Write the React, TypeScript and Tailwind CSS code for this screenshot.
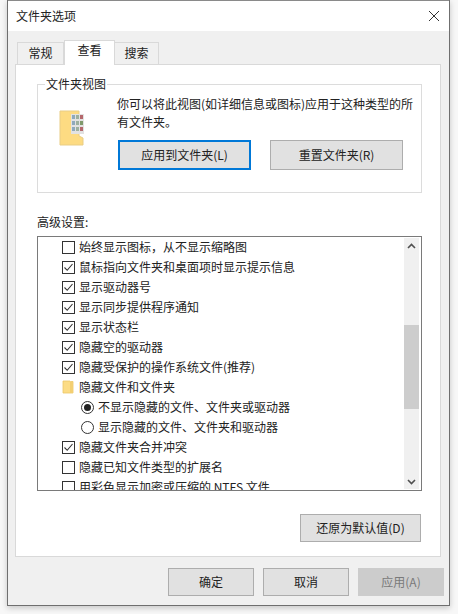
import React from "react";

const font = { fontFamily: '"Noto Sans CJK SC", "Liberation Sans", sans-serif' };

function Check({ checked }: { checked?: boolean }) {
  return (
    <span className="w-[13px] h-[13px] border border-[#333333] bg-white flex-none flex items-center justify-center">
      {checked && (
        <svg width="11" height="11" viewBox="0 0 11 11" fill="none">
          <path d="M1.5 5.5 L4.2 8.3 L9.5 2" stroke="#333333" strokeWidth="1.1" />
        </svg>
      )}
    </span>
  );
}

function Radio({ checked }: { checked?: boolean }) {
  return (
    <span className="w-[13px] h-[13px] rounded-full border border-[#333333] bg-white flex-none flex items-center justify-center">
      {checked && <span className="w-[7px] h-[7px] rounded-full bg-[#222222]" />}
    </span>
  );
}

function Row({ kind, checked, text }: { kind: "check" | "radio" | "folder"; checked?: boolean; text: string }) {
  return (
    <div className={`h-5 flex-none flex items-center ${kind === "radio" ? "pl-[43px] gap-[4px]" : "pl-[24px] gap-[4px]"}`}>
      {kind === "check" && <Check checked={checked} />}
      {kind === "radio" && <Radio checked={checked} />}
      {kind === "folder" && (
        <svg width="13" height="14" viewBox="0 0 13 14" className="flex-none">
          <path d="M1 1 H8 L8.5 1.5 H11 V13 H1 Z" fill="#fcdc85" stroke="#ecc667" strokeWidth="0.8" />
          <rect x="8" y="2" width="3" height="11" fill="#f3cf72" />
        </svg>
      )}
      <span className="text-[12px] leading-5 text-[#222222] whitespace-nowrap">{text}</span>
    </div>
  );
}

function Btn({ className, children }: { className: string; children: React.ReactNode }) {
  return (
    <div className={`flex items-center justify-center text-[12px] flex-none ${className}`}>{children}</div>
  );
}

const plain = "border border-[#adadad] bg-[#e1e1e1] text-[#222222]";

export default function App() {
  return (
    <div className="w-[458px] h-[614px] bg-[#f7f7f7] overflow-hidden" style={font}>
      <div className="ml-[7px] w-[443px] h-[606px] border border-t-0 border-[#6f6f6f] bg-[#f0f0f0] flex flex-col shadow-[0_2px_6px_rgba(0,0,0,0.2)]">
        <div className="h-[31px] flex-none bg-white border-t border-[#8a8a8a] flex items-center justify-between pl-[8px] pr-[9px] pb-[1px]">
          <span className="text-[12px] text-[#222222]">文件夹选项</span>
          <svg width="12" height="12" viewBox="0 0 12 12" fill="none">
            <path d="M1 1 L11 11 M11 1 L1 11" stroke="#333333" strokeWidth="1" />
          </svg>
        </div>

        <div className="flex-none flex items-end h-[33px] pl-[9px]">
          <div className="w-[47px] h-[22px] bg-[#f0f0f0] border border-b-0 border-[#d9d9d9] text-[12px] text-[#222222] flex items-center justify-center pb-[2px]">常规</div>
          <div className="w-[51px] h-[25px] -mb-px relative bg-white border border-b-0 border-[#d9d9d9] text-[12px] text-[#222222] flex items-start justify-center">查看</div>
          <div className="w-[44px] h-[22px] bg-[#f0f0f0] border border-b-0 border-l-0 border-[#d9d9d9] text-[12px] text-[#222222] flex items-center justify-center pb-[1px]">搜索</div>
        </div>

        <div className="mx-[7px] w-[426px] h-[493px] flex-none bg-white border border-[#d9d9d9] pt-[20px] pl-[21px] flex flex-col">
          <fieldset className="w-[385px] h-[116px] flex-none border border-[#dcdcdc] -mt-[8px] flex">
            <legend className="ml-[7px] px-[1px] text-[12px] leading-[14px] text-[#222222]">文件夹视图</legend>
            <svg width="26" height="36" viewBox="0 0 26 36" className="flex-none mt-[19px] ml-[21px]">
              <path d="M1 1 H20 V26 L24 28 V35 H1 Z" fill="#fddb82" stroke="#e9cd85" />
              <rect x="12" y="4" width="13" height="20" fill="#e2e2e2" />
              <g>
                <rect x="13" y="5" width="3" height="4" fill="#8fa9bb" />
                <rect x="17" y="5" width="3" height="4" fill="#9db09d" />
                <rect x="21" y="5" width="3" height="4" fill="#b5686c" />
                <rect x="13" y="11" width="3" height="4" fill="#8fa9bb" />
                <rect x="17" y="11" width="3" height="4" fill="#9db09d" />
                <rect x="21" y="11" width="3" height="4" fill="#7f9a6c" />
                <rect x="13" y="17" width="3" height="4" fill="#8fa9bb" />
                <rect x="17" y="17" width="3" height="4" fill="#9db09d" />
                <rect x="21" y="17" width="3" height="4" fill="#b5686c" />
              </g>
            </svg>
            <div className="ml-[32px] flex-1 flex flex-col">
              <p className="mt-[4px] w-[299px] text-[12px] leading-[18px] text-[#222222]">
                你可以将此视图(如详细信息或图标)应用于这种类型的所有文件夹。
              </p>
              <div className="mt-[9px] flex gap-[19px] pl-[1px]">
                <Btn className="w-[133px] h-[30px] border-2 border-[#0078d7] bg-[#e1e1e1] text-[#222222]">应用到文件夹(L)</Btn>
                <Btn className={`w-[133px] h-[30px] ${plain}`}>重置文件夹(R)</Btn>
              </div>
            </div>
          </fieldset>

          <div className="mt-[20px] h-[18px] flex-none text-[12px] leading-[18px] text-[#222222]">高级设置:</div>

          <div className="mt-[5px] w-[385px] h-[255px] flex-none border border-[#7a7a7a] flex overflow-hidden">
            <div className="flex-1 h-full flex flex-col overflow-hidden">
              <Row kind="check" text="始终显示图标，从不显示缩略图" />
              <Row kind="check" checked text="鼠标指向文件夹和桌面项时显示提示信息" />
              <Row kind="check" checked text="显示驱动器号" />
              <Row kind="check" checked text="显示同步提供程序通知" />
              <Row kind="check" checked text="显示状态栏" />
              <Row kind="check" checked text="隐藏空的驱动器" />
              <Row kind="check" checked text="隐藏受保护的操作系统文件(推荐)" />
              <Row kind="folder" text="隐藏文件和文件夹" />
              <Row kind="radio" checked text="不显示隐藏的文件、文件夹或驱动器" />
              <Row kind="radio" text="显示隐藏的文件、文件夹和驱动器" />
              <Row kind="check" checked text="隐藏文件夹合并冲突" />
              <Row kind="check" text="隐藏已知文件类型的扩展名" />
              <Row kind="check" text="用彩色显示加密或压缩的 NTFS 文件" />
            </div>
            <div className="w-[15px] my-[1px] mr-[2px] bg-[#f0f0f0] flex-none flex flex-col items-center">
              <div className="h-[15px] flex-none flex items-center justify-center">
                <svg width="9" height="6" viewBox="0 0 9 6" fill="none">
                  <path d="M1 5 L4.5 1.5 L8 5" stroke="#505050" strokeWidth="1.6" />
                </svg>
              </div>
              <div className="h-[72px] flex-none" />
              <div className="h-[84px] w-full bg-[#cdcdcd] flex-none" />
              <div className="flex-1" />
              <div className="h-[15px] flex-none flex items-center justify-center">
                <svg width="9" height="6" viewBox="0 0 9 6" fill="none">
                  <path d="M1 1 L4.5 4.5 L8 1" stroke="#505050" strokeWidth="1.6" />
                </svg>
              </div>
            </div>
          </div>

          <Btn className={`mt-[23px] ml-[263px] w-[121px] h-[28px] ${plain}`}>还原为默认值(D)</Btn>
        </div>

        <div className="mt-[11px] flex gap-[9px] pl-[160px]">
          <Btn className={`w-[86px] h-[28px] ${plain}`}>确定</Btn>
          <Btn className={`w-[86px] h-[28px] ${plain}`}>取消</Btn>
          <Btn className="w-[86px] h-[28px] border border-[#cccccc] bg-[#cccccc] text-[#7a7a7a]">应用(A)</Btn>
        </div>
      </div>
    </div>
  );
}
